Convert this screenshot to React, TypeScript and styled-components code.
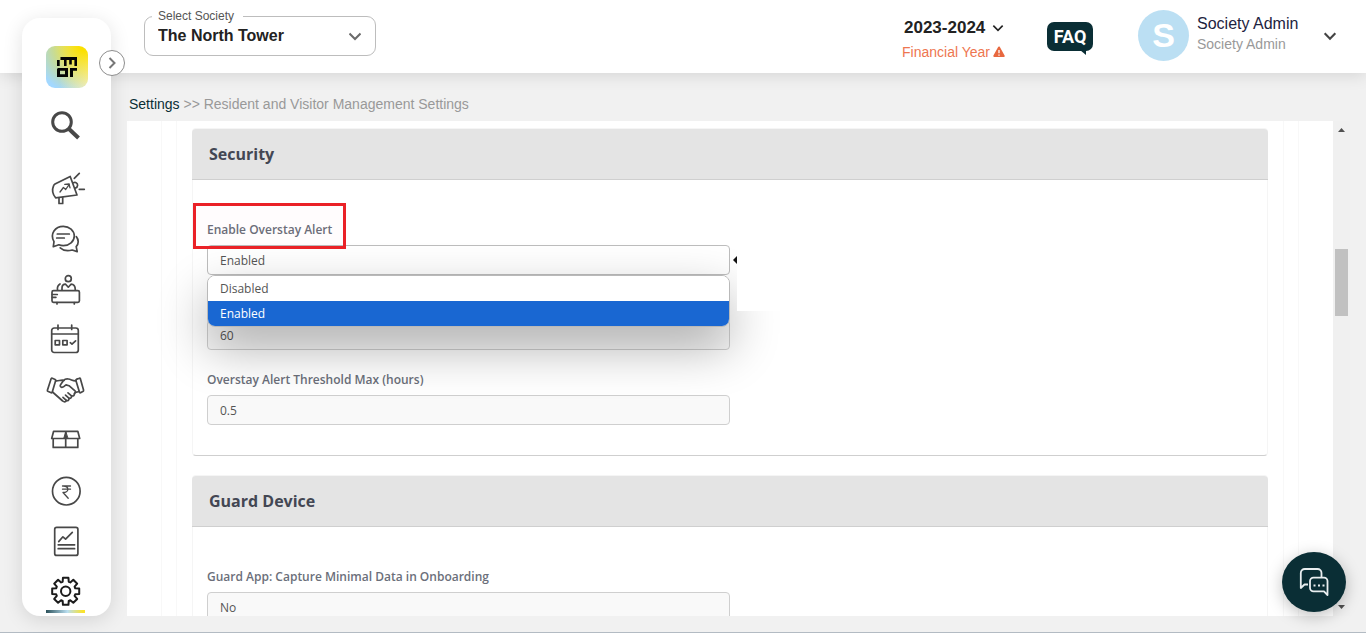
import React, { useState } from "react";
import styled, { createGlobalStyle } from "styled-components";

const sans = `"Liberation Sans", Arial, sans-serif`;
const body = `"Open Sans", "Noto Sans", sans-serif`;

const GlobalStyle = createGlobalStyle`
  *, *::before, *::after { box-sizing: border-box; }
  body { margin: 0; background: #f1f1f1; font-family: ${sans}; color: #222; }
  button, input, select { font: inherit; color: inherit; margin: 0; }
  button { border: 0; padding: 0; background: none; cursor: pointer; }
`;

const Shell = styled.div`
  display: grid;
  grid-template-columns: 127px minmax(0, 1fr);
  grid-template-rows: 73px 48px minmax(0, 1fr);
  height: 100vh;
  padding-bottom: 16px;
  border-bottom: 1px solid #b3bbc3;
`;

const Header = styled.header`
  grid-area: 1 / 1 / 2 / 3;
  display: flex;
  align-items: center;
  padding: 0 28px 0 144px;
  background: #fff;
  box-shadow: 0 2px 16px rgba(0, 0, 0, 0.12);
`;

const SocietyField = styled.fieldset`
  position: relative;
  width: 232px;
  height: 47px;
  margin: -8px auto 0 0;
  padding: 0;
  border: 1px solid #bdbdbd;
  border-radius: 9px;
`;

const SocietyLegend = styled.legend`
  margin-left: 7px;
  padding: 0 9px 0 6px;
  font-size: 12px;
  line-height: 14px;
  color: #555;
`;

const SocietySelect = styled.select`
  display: block;
  width: 100%;
  height: 24px;
  padding: 0 40px 0 13px;
  border: 0;
  background: transparent;
  appearance: none;
  font-size: 16px;
  font-weight: 700;
  color: #222;
`;

const FieldChevron = styled.svg`
  position: absolute;
  right: 14px;
  top: 7px;
  pointer-events: none;
`;

const YearButton = styled.button`
  display: grid;
  gap: 4px;
  width: 104px;
  margin-right: 41px;
  padding-top: 6px;
  text-align: left;
`;

const YearLine = styled.span`
  display: flex;
  align-items: center;
  gap: 6px;
  padding-left: 2px;
  font-size: 17px;
  line-height: 20px;
  font-weight: 700;
  white-space: nowrap;
`;

const YearNote = styled.span`
  display: flex;
  align-items: center;
  gap: 3px;
  font-size: 14px;
  line-height: 20px;
  color: #ee7650;
  white-space: nowrap;
`;

const FaqButton = styled.button`
  position: relative;
  width: 46px;
  height: 29px;
  margin: 0 45px 0 0;
  border-radius: 7px;
  background: #0a2e35;
  color: #fff;
  font-family: Roboto, sans-serif;
  font-size: 18px;
  font-weight: 700;

  &::after {
    content: "";
    position: absolute;
    right: 7px;
    top: 28px;
    border-top: 5px solid #0a2e35;
    border-left: 6px solid transparent;
  }
`;

const Avatar = styled.span`
  display: grid;
  place-items: center;
  width: 51px;
  height: 51px;
  margin-right: 8px;
  border-radius: 50%;
  background: #bbdff3;
  color: #fff;
  font-size: 34px;
  font-weight: 700;
`;

const ProfileButton = styled.button`
  display: flex;
  align-items: center;
  text-align: left;
  padding-bottom: 2px;
`;

const ProfileText = styled.span`
  display: grid;
  width: 125px;
  padding-bottom: 4px;
  line-height: 20px;
`;

const ProfileName = styled.span`
  font-size: 16px;
  color: #1d2340;
`;

const ProfileRole = styled.span`
  font-size: 14px;
  color: #999;
`;

const Sidebar = styled.nav`
  grid-area: 1 / 1 / 4 / 2;
  position: relative;
  z-index: 5;
  width: 89px;
  margin: 18px 0 0 22px;
  padding: 28px 0 0 24px;
  border-radius: 18px;
  background: #fff;
  box-shadow: 0 4px 20px rgba(0, 0, 0, 0.12);
`;

const LogoLink = styled.a`
  display: grid;
  place-items: center;
  width: 42px;
  height: 42px;
  border-radius: 9px;
  background: radial-gradient(circle at 90% 0, #fbe000 8%, rgba(248, 228, 60, 0) 88%),
    linear-gradient(80deg, #a3d8ff 30%, #f8f5e4 95%);
`;

const SideButton = styled.button<{ $active?: boolean; $gapAfter?: boolean }>`
  position: relative;
  display: flex;
  align-items: center;
  width: 42px;
  height: 50px;
  margin-top: ${(p) => (p.$gapAfter ? "12px" : "0")};
  margin-bottom: ${(p) => (p.$gapAfter ? "15px" : "0")};
  color: ${(p) => (p.$active ? "#1b1b1b" : "#484848")};

  &::after {
    content: "";
    display: ${(p) => (p.$active ? "block" : "none")};
    position: absolute;
    left: 0;
    bottom: 2px;
    width: 39px;
    height: 3px;
    background: linear-gradient(90deg, #2c525b, #b9def0 55%, #fbe32b 95%);
  }
`;

const ExpandButton = styled.button`
  position: absolute;
  top: 32px;
  right: -14px;
  display: grid;
  place-items: center;
  width: 26px;
  height: 26px;
  border: 1px solid #8d8d8d;
  border-radius: 50%;
  background: #fff;
`;

const Breadcrumb = styled.nav`
  grid-area: 2 / 2;
  padding: 21px 0 0 2px;
  font-size: 14px;
  line-height: 20px;
  color: #999;

  a {
    color: #0a2e35;
    text-decoration: none;
  }
`;

const Viewport = styled.main`
  grid-area: 3 / 2;
  display: flex;
  margin-right: 16px;
  min-height: 0;
  font-family: ${body};
`;

const Panel = styled.div`
  flex: 1;
  min-width: 0;
  overflow: hidden;
  padding: 0 34px;
  background: #fff;
`;

const Frame = styled.div`
  padding: 0 14px;
  border: solid #f8f8f8;
  border-width: 0 1px;
`;

const InnerFrame = styled(Frame)`
  padding: 7px 15px 0;
`;

const Card = styled.section`
  margin-bottom: 19px;
  border: 1px solid #f5f5f5;
  border-bottom-color: #cfcfcf;
  border-radius: 4px;
`;

const CardHeader = styled.h2`
  margin: 0 -1px;
  padding: 14px 17px 13px;
  border-bottom: 1px solid #cfcfcf;
  border-radius: 4px 4px 0 0;
  background: #e4e4e4;
  font-size: 16px;
  line-height: 23px;
  font-weight: 700;
  color: #434753;
`;

const CardBody = styled.div`
  display: grid;
  gap: 20px;
  width: 50%;
  padding: 40px 0 30px 14px;
`;

const Field = styled.div`
  position: relative;
  display: flex;
  flex-direction: column;
  justify-content: flex-end;
  align-items: flex-start;
  gap: 5px;
  min-height: 55px;
`;

const Label = styled.label<{ $marked?: boolean }>`
  position: relative;
  font-size: 12px;
  line-height: 20px;
  font-weight: 600;
  color: #6b6f7a;

  &::after {
    content: "";
    display: ${(p) => (p.$marked ? "block" : "none")};
    position: absolute;
    z-index: 3;
    inset: -17px -14px -9px;
    border: 3px solid #ea2127;
    background: rgba(255, 0, 60, 0.01);
    pointer-events: none;
  }
`;

const TextBox = styled.input`
  width: 100%;
  height: 30px;
  padding: 0 12px;
  border: 1px solid #cfcfcf;
  border-radius: 4px;
  background: #f9f9f9;
  font-size: 12px;
  color: #555;
`;

const SelectBox = styled.select<{ $open?: boolean }>`
  width: 100%;
  height: 30px;
  padding: 0 12px;
  border: 1px solid ${(p) => (p.$open ? "#bdbdbd" : "#cfcfcf")};
  border-radius: 4px;
  background: ${(p) => (p.$open ? "#fff" : "#f9f9f9")};
  appearance: none;
  font-size: 12px;
  color: #555;
`;

const Menu = styled.div`
  position: absolute;
  z-index: 1;
  top: 100%;
  left: 0;
  width: 100%;
  border: 1px solid #b9b9b9;
  border-radius: 8px;
  overflow: hidden;
  background: #fff;
  box-shadow: 0 20px 50px rgba(0, 0, 0, 0.32);
`;

const MenuItem = styled.button<{ $selected: boolean }>`
  display: block;
  width: 100%;
  height: 25px;
  padding: 0 12px;
  text-align: left;
  font-size: 12px;
  color: ${(p) => (p.$selected ? "#fff" : "#555")};
  background: ${(p) => (p.$selected ? "#1967d2" : "#fff")};
`;

const Hint = styled.div`
  position: absolute;
  z-index: 2;
  left: calc(100% + 7px);
  top: 0;
  width: 120px;
  height: 91px;
  background: #fff;

  &::before {
    content: "";
    position: absolute;
    right: 100%;
    top: 36px;
    border: 4px solid transparent;
    border-left-width: 0;
    border-right-color: #111;
  }
`;

const ScrollTrack = styled.div`
  display: flex;
  flex-direction: column;
  align-items: center;
  width: 17px;
  background: #f0f0f0;
`;

const ScrollArrow = styled.button`
  display: grid;
  place-items: center;
  width: 17px;
  height: 18px;
`;

const ScrollThumb = styled.div`
  width: 13px;
  height: 67px;
  background: #c1c1c1;
`;

const ScrollGap = styled.div<{ $grow: number }>`
  flex: ${(p) => p.$grow} 1 0;
`;

const ChatButton = styled.button`
  position: fixed;
  right: 20px;
  bottom: 21px;
  z-index: 6;
  display: grid;
  place-items: center;
  width: 64px;
  height: 60px;
  border-radius: 50%;
  background: #0a2e35;
  box-shadow: 0 4px 16px rgba(0, 0, 0, 0.25);
`;

const Chevron = ({ size = 12, color = "#222", width = 2 }) => (
  <svg width={size} height={size} viewBox="0 0 12 12" fill="none" stroke={color} strokeWidth={width}>
    <path d="M2 4l4 4 4-4" />
  </svg>
);

const SideIcon = ({ children }: { children: React.ReactNode }) => (
  <svg
    width="40"
    height="40"
    viewBox="0 0 40 40"
    fill="none"
    stroke="currentColor"
    strokeWidth="1.7"
    strokeLinecap="round"
    strokeLinejoin="round"
    aria-hidden="true"
  >
    {children}
  </svg>
);

const gearOutline = (cx: number, cy: number) => {
  const points: string[] = [];
  for (let i = 0; i < 8; i++) {
    const mid = (i * Math.PI) / 4;
    [
      [-0.31, 10],
      [-0.2, 13.8],
      [0.2, 13.8],
      [0.31, 10],
    ].forEach(([offset, r]) => {
      const a = mid + offset;
      points.push(`${(cx + r * Math.cos(a)).toFixed(2)} ${(cy + r * Math.sin(a)).toFixed(2)}`);
    });
  }
  return `M${points.join("L")}Z`;
};

const sideItems: { name: string; active?: boolean; icon: React.ReactNode }[] = [
  {
    name: "Announcements",
    icon: (
      <>
        <path d="M24.2 6.5 31 25 9.6 27.8C6.5 24 5.7 20 7.6 15.6Q8 14.6 9 14Z" />
        <path d="M27.3 12.8c2.3-1 4.4.3 4.3 2.6-.1 1.4-1 2.5-2.3 2.8" />
        <path d="m28.3 8.3 5-5M33.3 19.3h5M13 28v5.5h3.7v-6" />
        <path strokeWidth="1.3" d="m14 22 3.4-4.5 2.3 2 3.7-5.3M18.7 14.3l4.3-.3 1 3.8" />
      </>
    ),
  },
  {
    name: "Conversations",
    icon: (
      <>
        <path d="M7.3 26.7 8 21.7C3.5 13.5 9.3 6.3 17.3 6.3c6 0 11 4.3 11 9.7s-5 9.7-11 9.7c-1.7 0-3.2-.3-4.5-.9Z" />
        <path d="M11.3 14h12M10.7 18h7.6" />
        <path d="M30.3 16.6c2.5 3 2.6 7.2-.1 10l1 5-5-1.6c-4.5 1.3-9 .5-12-2.2" />
      </>
    ),
  },
  {
    name: "Front desk",
    icon: (
      <>
        <circle cx="22.3" cy="8.7" r="3" />
        <path d="M16 20v-2c0-2.3 1.6-3.8 3.6-3.8l2.7 3 2.7-3c2.3 0 4.3 2 4.3 5.8M11.5 20c-.4-2.7.3-4.7 2.5-6" />
        <rect x="6" y="20.7" width="27.4" height="11.6" rx="1.5" />
        <path d="M6.3 24.5h5M6.3 27.3h3.6M11 32.5v1.5M28.3 32.5v1.5" />
      </>
    ),
  },
  {
    name: "Calendar",
    icon: (
      <>
        <rect x="5.7" y="8" width="26.6" height="24.5" rx="2.5" />
        <path d="M5.7 14h26.6M12 5v4.5M25.7 5v4.5" />
        <path d="M9.2 20.5h4.3v4.3H9.2zM16.8 20.5h4.3v4.3h-4.3zM24.3 22.7l1.7 1.5 3.6-3.4" />
      </>
    ),
  },
  {
    name: "Partners",
    icon: (
      <>
        <path d="M5.2 8.6Q5.6 8 6.3 8.3l2.9 1.2q.7.3.5 1L6.2 22.3q-.3.8-1 .5l-3.4-1.6q-.6-.3-.4-1ZM34.3 8.5Q34 7.9 33.3 8.2l-3 1.2q-.6.3-.4 1l3.6 11.9q.3.7 1 .4l2.7-1.5q.6-.4.4-1Z" />
        <path d="M9.7 10.8c3.3.4 4.5-1.3 8.6-.5M6.5 22l10.2 9c1.3 1.2 3.3 1.4 3.6-.6 1.6.8 3-.4 2.6-2.2 1.7.6 3-.6 2.6-2.3 2 .4 3.2-.7 2.8-2.3 1.5-.2 1.7-1.8.7-2.7l-6-5.2-3-.8c-1.4 1.3-2.6 2.6-4.3 2.4-1.5-.2-1.9-1.6-1-2.9l3-4.1c1.2-1.4 2.7-1.5 4.6-1.3 3 .4 4.7 2.3 7.8 1.8M33 21.5l-4.3 1.2" />
        <path d="m20.3 30.4-3.3-3M22.9 28.2l-3.4-3.1M25.5 25.9l-3.5-3.1" />
      </>
    ),
  },
  {
    name: "Parcels",
    icon: (
      <>
        <path d="M7.6 11.3h24.2l1.9 7.2H5.7ZM7.2 18.5v8.9h24.6v-8.9M19.7 11.3v16" />
        <path d="m19.7 12-2 6.5h4Z" fill="currentColor" strokeWidth="1" />
      </>
    ),
  },
  {
    name: "Accounts",
    icon: (
      <>
        <circle cx="20.3" cy="21.2" r="13.8" />
        <path strokeWidth="1.3" d="M16.5 16h8M16.5 19.2h8M17 16c6.5-.3 6.5 6.5 0 6.5l5.2 5.7" />
      </>
    ),
  },
  {
    name: "Reports",
    icon: (
      <>
        <rect x="8.7" y="7.4" width="23.2" height="28" rx="2" />
        <path d="m12.7 21.6 4.2-4.8 2.7 2.4 6.7-6.9M12.2 24.8h16.4M12.2 28.7h16.4" />
      </>
    ),
  },
  {
    name: "Settings",
    active: true,
    icon: (
      <>
        <path strokeWidth="2" d={gearOutline(19.7, 21.3)} />
        <circle strokeWidth="2" cx="19.7" cy="21.3" r="4.7" />
      </>
    ),
  },
];

const overstayOptions = ["Disabled", "Enabled"];

export default function App() {
  const [overstay, setOverstay] = useState("Enabled");
  const [open, setOpen] = useState(true);

  return (
    <>
      <GlobalStyle />
      <Shell>
        <Header>
          <SocietyField>
            <SocietyLegend>
              <label htmlFor="society">Select Society</label>
            </SocietyLegend>
            <SocietySelect id="society">
              <option>The North Tower</option>
            </SocietySelect>
            <FieldChevron width="12" height="12" viewBox="0 0 12 12" fill="none" stroke="#6b6b6b" strokeWidth="2">
              <path d="M.5 3.500 6 9l5.500-5.500" />
            </FieldChevron>
          </SocietyField>
          <YearButton>
            <YearLine>
              2023-2024
              <Chevron size={14} width={1.4} />
            </YearLine>
            <YearNote>
              Financial Year
              <svg width="12" height="12" viewBox="0 0 12 12" aria-hidden="true">
                <path d="M6 1.500 10.700 10H1.300Z" fill="#e8683f" stroke="#e8683f" strokeWidth="2" strokeLinejoin="round" />
                <path d="M6 4v3.300M6 8.600v1.200" stroke="#fff" strokeWidth="1.300" />
              </svg>
            </YearNote>
          </YearButton>
          <FaqButton>FAQ</FaqButton>
          <ProfileButton>
            <Avatar>S</Avatar>
            <ProfileText>
              <ProfileName>Society Admin</ProfileName>
              <ProfileRole>Society Admin</ProfileRole>
            </ProfileText>
            <Chevron size={16} color="#444" width={1.6} />
          </ProfileButton>
        </Header>

        <Sidebar aria-label="Main">
          <LogoLink href="#" aria-label="Home">
            <svg width="22" height="22" viewBox="0 0 22 22" fill="#050505" aria-hidden="true">
              <path
                fillRule="evenodd"
                d="M4.500 1H21v9h-2.600V4h-2.600v4.500h-2.600V4h-2.600v6H8V4H4.500ZM1 4h2.700v6H1ZM2 12h10v9H1v-8ZM4 14.800v3.400h5v-3.400ZM14 12h7v2.800h-4V21h-3Z"
              />
            </svg>
          </LogoLink>
          <ExpandButton aria-label="Expand menu">
            <svg width="12" height="14" viewBox="0 0 12 14" fill="none" stroke="#777" strokeWidth="2">
              <path d="m3.500 2 5 5-5 5" />
            </svg>
          </ExpandButton>
          <SideButton aria-label="Search" $gapAfter>
            <SideIcon>
              <circle cx="16" cy="17" r="9.3" strokeWidth="3" />
              <path d="m22.500 23.500 10 9.500" strokeWidth="4" strokeLinecap="butt" />
            </SideIcon>
          </SideButton>
          {sideItems.map((item) => (
            <SideButton key={item.name} aria-label={item.name} $active={item.active}>
              <SideIcon>{item.icon}</SideIcon>
            </SideButton>
          ))}
        </Sidebar>

        <Breadcrumb aria-label="Breadcrumb">
          <a href="#">Settings</a> &gt;&gt; Resident and Visitor Management Settings
        </Breadcrumb>

        <Viewport>
          <Panel>
            <Frame>
              <InnerFrame>
                <Card>
                  <CardHeader>Security</CardHeader>
                  <CardBody>
                    <Field>
                      <Label htmlFor="overstay" $marked>
                        Enable Overstay Alert
                      </Label>
                      <SelectBox
                        id="overstay"
                        $open
                        value={overstay}
                        onChange={(e) => setOverstay(e.target.value)}
                        onMouseDown={(e) => {
                          e.preventDefault();
                          setOpen(!open);
                        }}
                      >
                        {overstayOptions.map((o) => (
                          <option key={o}>{o}</option>
                        ))}
                      </SelectBox>
                      {open && (
                        <Menu role="listbox" aria-label="Enable Overstay Alert">
                          {overstayOptions.map((o) => (
                            <MenuItem
                              key={o}
                              role="option"
                              aria-selected={o === overstay}
                              $selected={o === overstay}
                              onClick={() => {
                                setOverstay(o);
                                setOpen(false);
                              }}
                            >
                              {o}
                            </MenuItem>
                          ))}
                        </Menu>
                      )}
                      <Hint />
                    </Field>
                    <Field>
                      <TextBox aria-label="Overstay alert threshold" defaultValue="60" />
                    </Field>
                    <Field>
                      <Label htmlFor="max-hours">Overstay Alert Threshold Max (hours)</Label>
                      <TextBox id="max-hours" defaultValue="0.5" />
                    </Field>
                  </CardBody>
                </Card>
                <Card>
                  <CardHeader>Guard Device</CardHeader>
                  <CardBody>
                    <Field>
                      <Label htmlFor="minimal-data">Guard App: Capture Minimal Data in Onboarding</Label>
                      <SelectBox id="minimal-data">
                        <option>No</option>
                      </SelectBox>
                    </Field>
                  </CardBody>
                </Card>
              </InnerFrame>
            </Frame>
          </Panel>
          <ScrollTrack>
            <ScrollArrow aria-label="Scroll up">
              <svg width="7" height="4" viewBox="0 0 7 4" fill="#505050">
                <path d="M3.500 0 7 4H0Z" />
              </svg>
            </ScrollArrow>
            <ScrollGap $grow={110} />
            <ScrollThumb />
            <ScrollGap $grow={282} />
            <ScrollArrow aria-label="Scroll down">
              <svg width="7" height="4" viewBox="0 0 7 4" fill="#505050">
                <path d="M3.500 4 7 0H0Z" />
              </svg>
            </ScrollArrow>
          </ScrollTrack>
        </Viewport>

        <ChatButton aria-label="Open chat">
          <svg width="32" height="32" viewBox="0 0 32 32" fill="none" stroke="#e9eef0" strokeWidth="1.8" strokeLinejoin="round">
            <path d="M10 18.500H6.500L2.800 22V7a4 4 0 0 1 4-4h12.700a4 4 0 0 1 4 4v4" />
            <path d="M15.500 11.600H26a3.500 3.500 0 0 1 3.500 3.500v14L26 25.300H15.500a3.500 3.500 0 0 1-3.500-3.500v-6.700a3.500 3.500 0 0 1 3.500-3.500Z" />
            <path d="M15.500 19.500h2M20 19.500h2M24.500 19.500h2" strokeWidth="2.2" />
          </svg>
        </ChatButton>
      </Shell>
    </>
  );
}
